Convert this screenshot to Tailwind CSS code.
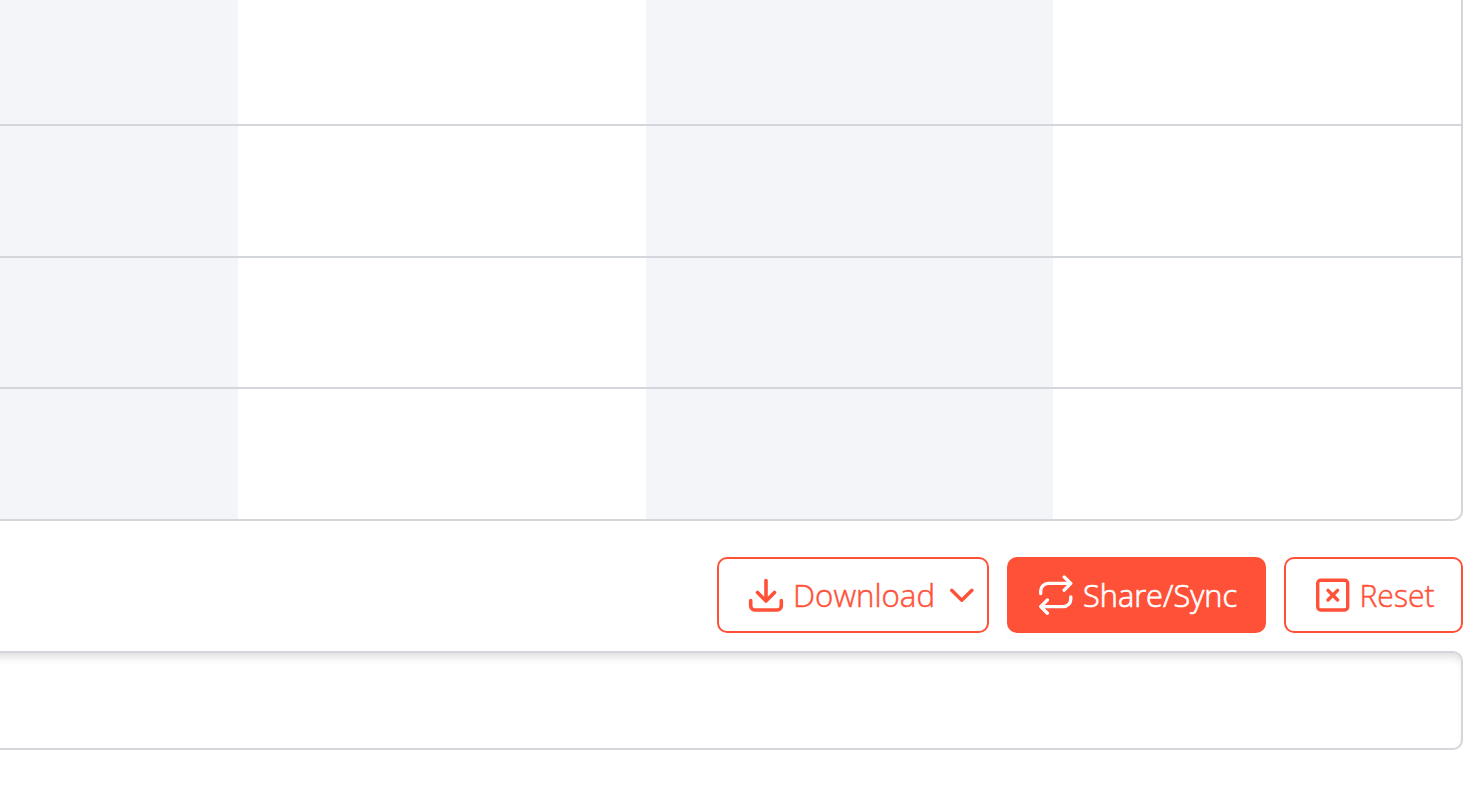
<!DOCTYPE html>
<html lang="en">
<head>
<meta charset="utf-8">
<title>Schedule</title>
<script src="https://cdn.jsdelivr.net/npm/@tailwindcss/browser@4"></script>
</head>
<body class="bg-white w-[1477px] h-[799px] overflow-hidden font-['Open_Sans','Noto_Sans',sans-serif]">
<main class="w-[1463px] flex flex-col">
  <section class="h-[521px] border-r-2 border-b-2 border-[#d3d6da] rounded-br-[10px] overflow-hidden flex flex-col">
    <div class="h-[126px] shrink-0 border-b-2 border-[#d3d6da] grid grid-cols-[238px_408px_407px_1fr]"><div class="bg-[#f4f5f9]"></div><div></div><div class="bg-[#f4f5f9]"></div><div></div></div>
    <div class="h-[132px] shrink-0 border-b-2 border-[#d3d6da] grid grid-cols-[238px_408px_407px_1fr]"><div class="bg-[#f4f5f9]"></div><div></div><div class="bg-[#f4f5f9]"></div><div></div></div>
    <div class="h-[131px] shrink-0 border-b-2 border-[#d3d6da] grid grid-cols-[238px_408px_407px_1fr]"><div class="bg-[#f4f5f9]"></div><div></div><div class="bg-[#f4f5f9]"></div><div></div></div>
    <div class="h-[130px] shrink-0 grid grid-cols-[238px_408px_407px_1fr]"><div class="bg-[#f4f5f9]"></div><div></div><div class="bg-[#f4f5f9]"></div><div></div></div>
  </section>
  <div class="mt-9 h-[76px] flex justify-end gap-[18px] text-[31.5px] leading-[44px] text-[#ff5138]">
    <button class="w-[272px] border-2 border-[#ff5138] rounded-[10px] flex items-center pl-[27px]">
      <svg class="size-10 shrink-0" viewBox="0 0 40 40" fill="none" stroke="currentColor" stroke-width="3.6" stroke-linecap="round" stroke-linejoin="round"><path d="M20 5.5V26M11.5 17.5 20 26l8.5-8.5M4.7 25.5V31a4 4 0 0 0 4 4h22.6a4 4 0 0 0 4-4v-5.5"/></svg>
      <svg class="ml-[5px] h-11 w-[146px] shrink-0 overflow-visible" fill="currentColor" stroke="currentColor" stroke-width="0.5"><text x="2" y="34" textLength="142" lengthAdjust="spacingAndGlyphs" font-weight="300">Download</text></svg>
      <svg class="ml-[9px] w-8 h-10 shrink-0" viewBox="0 0 32 40" fill="none" stroke="currentColor" stroke-width="3.4" stroke-linecap="round" stroke-linejoin="round"><path d="m5.7 15.2 10.1 10 10.1-10"/></svg>
    </button>
    <button class="w-[259px] rounded-[10px] bg-[#ff5138] text-white flex items-center pl-[29px]">
      <svg class="size-10 shrink-0" viewBox="0 0 40 40" fill="none" stroke="currentColor" stroke-width="3.3" stroke-linecap="round" stroke-linejoin="round"><path d="M4.7 18.5V16a7.5 7.5 0 0 1 7.5-7.6h22.6M28.2 2l6.6 6.4-6.6 6.8M34.8 22v2a7.5 7.5 0 0 1-7.5 7.6H4.7M11.4 25l-6.7 6.6 6.7 6.6"/></svg>
      <svg class="ml-[5px] h-11 w-[160px] shrink-0 overflow-visible" fill="currentColor" stroke="currentColor" stroke-width="0.7"><text x="2" y="34" textLength="154" lengthAdjust="spacingAndGlyphs" font-weight="300">Share/Sync</text></svg>
    </button>
    <button class="w-[179px] border-2 border-[#ff5138] rounded-[10px] flex items-center pl-[27px]">
      <svg class="size-10 shrink-0" viewBox="0 0 40 40" fill="none" stroke="currentColor" stroke-width="3.4" stroke-linecap="round" stroke-linejoin="round"><rect x="4.7" y="5.2" width="30" height="29.8" rx="3"/><path d="m15 15.4 9.6 9.6m0-9.6L15 25"/></svg>
      <svg class="ml-[5px] h-11 w-[82px] shrink-0 overflow-visible" fill="currentColor" stroke="currentColor" stroke-width="0.5"><text x="1.5" y="34" textLength="75" lengthAdjust="spacingAndGlyphs" font-weight="300">Reset</text></svg>
    </button>
  </div>
  <div class="-ml-5 mt-[18px] h-[99px] border-2 border-[#d3d6da] rounded-[10px] shadow-[inset_0_8px_8px_-4px_rgba(0,0,0,0.13)]"></div>
</main>
</body>
</html>
